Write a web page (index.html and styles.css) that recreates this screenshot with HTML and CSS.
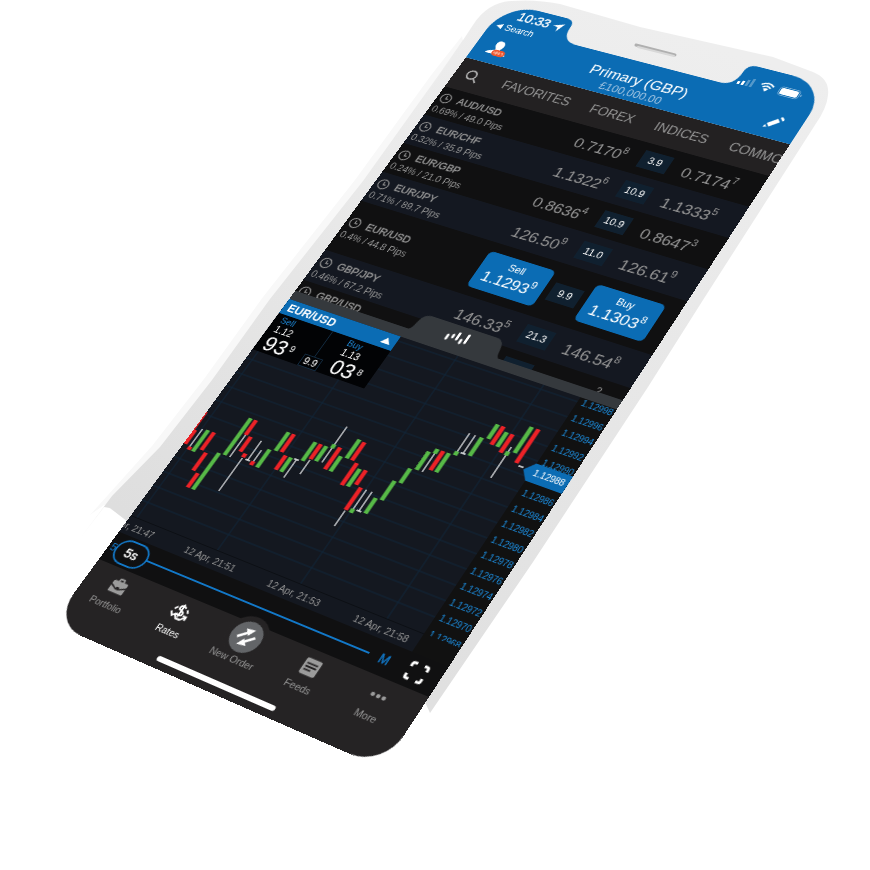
FILE: index.html
```html
<!DOCTYPE html>
<html lang="en">
<head>
<meta charset="utf-8">
<meta name="viewport" content="width=device-width, initial-scale=1">
<title>Rates – Primary (GBP)</title>
<link rel="stylesheet" href="styles.css">
</head>
<body>
<main class="scene">
  <svg class="body" width="870" height="870" viewBox="0 0 870 870" aria-hidden="true">
    <defs>
      <linearGradient id="shell" gradientUnits="userSpaceOnUse" x1="700" y1="40" x2="480" y2="700">
        <stop offset="0" stop-color="#eeeeee"/>
        <stop offset="1" stop-color="#e0e0e0"/>
      </linearGradient>
      <linearGradient id="edge" gradientUnits="userSpaceOnUse" x1="460" y1="40" x2="120" y2="510">
        <stop offset="0" stop-color="#eeeeee"/>
        <stop offset="1" stop-color="#dedede"/>
      </linearGradient>
    </defs>
    <path fill="#f8f8f8" d="M462 36L432 74L355 180L263 297L204 379L152 446L90 515L104 505L128 520L470 80Z"/>
    <path fill="url(#edge)" d="M463 40L438 76L363 181L270 299L212 380L160 447L112 496L82 536L104 507L110 508L128 522L200 500L470 80Z"/>
    <path fill="url(#shell)" d="M560 4L640 27L773 57L813 72Q830 79 828 95Q827 108 815 125L703 300L648 387L533 562L430 713L415 680L480 120L430 90L452 57L473 25Q488 2 512 1Q535 -1 560 4Z"/>
    <path d="M636 45L675 55" stroke="#b0b0b0" stroke-width="3" stroke-linecap="round"/>
    <path d="M638 47L674 56" stroke="#d8d8d8" stroke-width="2" stroke-linecap="round"/>
  </svg>

  <div class="screen">
    <header class="top">
      <div class="status">
        <div class="clock-side">
          <span class="time">10:33
            <svg width="13" height="13" viewBox="0 0 12 12" aria-hidden="true"><path fill="#fff" d="M12 0L0 5L6 6L7 12Z"/></svg>
          </span>
          <a class="back" href="#search"><span class="caret"></span>Search</a>
        </div>
        <div class="signals">
          <svg width="20" height="12" viewBox="0 0 20 12" aria-label="Signal">
            <path fill="#fff" d="M0 8h3v4H0zM5 6h3v6H5z"/>
            <path fill="#fff" fill-opacity=".3" d="M10 3h3v9h-3zM15 0h3v12h-3z"/>
          </svg>
          <svg width="17" height="13" viewBox="0 0 17 13" aria-label="Wi-Fi">
            <g fill="none" stroke="#fff" stroke-width="2"><path d="M1 4.5Q8.5-2 16 4.5"/><path d="M3.5 7.5Q8.5 3 13.5 7.5"/></g>
            <path fill="#fff" d="M5.5 9.5Q8.5 7 11.5 9.5L8.5 13Z"/>
          </svg>
          <svg width="28" height="13" viewBox="0 0 28 13" aria-label="Battery">
            <rect x=".5" y=".5" width="24" height="12" rx="3.5" fill="none" stroke="#fff" stroke-opacity=".45"/>
            <rect x="2" y="2" width="21" height="9" rx="2" fill="#fff"/>
            <path d="M26 4.5v4Q27.5 8 27.5 6.5T26 4.5" fill="#fff" fill-opacity=".5"/>
          </svg>
        </div>
      </div>
      <div class="title-bar">
        <button class="icon-button" type="button" aria-label="Account">
          <svg width="30" height="24" viewBox="0 0 30 24">
            <path fill="#fff" d="M13 0C17 0 19 3 19 6C19 10 17 11 17 13C17 15 26 15 27 20H1C2 15 11 15 11 13C11 11 8 10 8 6C8 3 9 0 13 0Z"/>
            <rect x="9" y="13" width="17" height="9" rx="4.5" fill="#f0562d"/>
            <path d="M12 16v3M14 16h2v3h-2zM18 16h1v3h-1zM21 16h2v3" stroke="#fbd0c0" fill="none"/>
          </svg>
        </button>
        <h1 class="title">Primary (GBP)<small class="balance">£100,000.00</small></h1>
        <button class="icon-button" type="button" aria-label="Edit">
          <svg width="22" height="22" viewBox="0 0 22 22">
            <path fill="#fff" d="M2 20L3 16L6 19ZM4 14L13 5L17 9L8 18ZM15 3L16 2Q17 1 18 2L20 4Q21 5 20 6L19 7Z"/>
          </svg>
        </button>
      </div>
    </header>

    <nav class="tabs" aria-label="Markets">
      <button class="tab search" type="button" aria-label="Search">
        <svg width="18" height="18" viewBox="0 0 18 18" fill="none" stroke="#b4b4b4" stroke-width="1.8"><circle cx="7.5" cy="7.5" r="6"/><path d="M12 12L17 17"/></svg>
      </button>
      <a class="tab" href="#favorites">FAVORITES</a>
      <a class="tab" href="#forex">FOREX</a>
      <a class="tab" href="#indices">INDICES</a>
      <a class="tab" href="#commodities">COMMODITIES</a>
    </nav>

    <svg class="defs" width="0" height="0" aria-hidden="true">
      <symbol id="clock" viewBox="0 0 14 14"><circle cx="7" cy="7" r="6" fill="none" stroke="#8f8f8f" stroke-width="1.3"/><path d="M7 3.5V7.5H10" fill="none" stroke="#8f8f8f" stroke-width="1.3"/></symbol>
    </svg>

    <div class="middle">
      <table class="rates">
        <tbody>
          <tr><th scope="row"><span class="pair"><svg class="clock"><use href="#clock"/></svg>AUD/USD</span><span class="move">0.69% / 49.0 Pips</span></th><td>0.7170<sup>8</sup></td><td class="spread"><span>3.9</span></td><td>0.7174<sup>7</sup></td></tr>
          <tr><th scope="row"><span class="pair"><svg class="clock"><use href="#clock"/></svg>EUR/CHF</span><span class="move">0.32% / 35.9 Pips</span></th><td>1.1322<sup>6</sup></td><td class="spread"><span>10.9</span></td><td>1.1333<sup>5</sup></td></tr>
          <tr><th scope="row"><span class="pair"><svg class="clock"><use href="#clock"/></svg>EUR/GBP</span><span class="move">0.24% / 21.0 Pips</span></th><td>0.8636<sup>4</sup></td><td class="spread"><span>10.9</span></td><td>0.8647<sup>3</sup></td></tr>
          <tr><th scope="row"><span class="pair"><svg class="clock"><use href="#clock"/></svg>EUR/JPY</span><span class="move">0.71% / 89.7 Pips</span></th><td>126.50<sup>9</sup></td><td class="spread"><span>11.0</span></td><td>126.61<sup>9</sup></td></tr>
          <tr class="active"><th scope="row"><span class="pair"><svg class="clock"><use href="#clock"/></svg>EUR/USD</span><span class="move">0.4% / 44.8 Pips</span></th><td><button class="deal" type="button"><span>Sell</span><b>1.1293<sup>9</sup></b></button></td><td class="spread"><span>9.9</span></td><td><button class="deal" type="button"><span>Buy</span><b>1.1303<sup>8</sup></b></button></td></tr>
          <tr><th scope="row"><span class="pair"><svg class="clock"><use href="#clock"/></svg>GBP/JPY</span><span class="move">0.46% / 67.2 Pips</span></th><td>146.33<sup>5</sup></td><td class="spread"><span>21.3</span></td><td>146.54<sup>8</sup></td></tr>
          <tr class="peek"><th scope="row"><span class="pair"><svg class="clock"><use href="#clock"/></svg>GBP/USD</span></th><td></td><td class="spread"><span></span></td><td><sup>2</sup></td></tr>
        </tbody>
      </table>
    </div>

    <section class="panel" aria-label="EUR/USD chart">
      <button class="handle" type="button" aria-label="Collapse chart">
        <svg width="118" height="24" viewBox="0 0 118 24">
          <path fill="#35393d" d="M0 24C6 22 5 18 7 10Q9 0 18 0H100Q109 0 111 10C113 18 112 22 118 24Z"/>
          <path d="M48 15v5M54 13v3M59.5 9v8M65 16v4M70.5 8v10" stroke="#fff" stroke-width="3" stroke-linecap="round" fill="none"/>
        </svg>
      </button>
      <div class="chart">
        <svg class="plot" viewBox="0 0 371 300" aria-hidden="true">
          <path class="grid" d="M0 6H371M0 26H371M0 45H371M0 65H371M0 84H371M0 104H371M0 123H371M0 143H371M0 163H371M0 182H371M0 202H371M0 221H371M0 241H371M0 260H371M0 280H371M8 0V300M115 0V300M221 0V300M327 0V300"/>
          <path class="wick" d="M9 180V204M59 169V199M73 195V239M80 169V195M77 195H83M87 179V195M130 175V199M127 175H133M144 170V189M158 149V168M158 120V145M215 209V229M222 179V204M229 179V204M226 204H232M265 113V139M286 80V104M293 80V104M290 104H296M336 79V119M355 96H361"/>
          <path class="rise" d="M16 179V208M45 199V248M52 149V199M95 175V199M102 149V174M123 175V194M137 149V174M151 149V169M158 144V149M173 154V174M180 129V154M201 160V183M222 204V209M237 184V204M244 159V184M251 140V159M258 115V139M265 109V115M279 109V134M286 104V109M301 80V104M308 60V79M322 65V84M336 85V90M343 50V84"/>
          <path class="fall" d="M-1 160V185M2 184V203M10 204V208M24 179V203M31 204V228M38 229V248M59 149V169M66 169V189M73 189V194M87 194V199M109 149V173M116 175V194M144 149V169M166 145V174M187 130V154M194 155V184M208 159V178M215 179V208M272 109V134M315 60V84M329 65V89M351 50V94"/>
        </svg>
        <ol class="times"><li>12 Apr, 21:47</li><li>12 Apr, 21:51</li><li>12 Apr, 21:53</li><li>12 Apr, 21:58</li></ol>
        <div class="axis">
          <ol class="prices"><li>1.12998</li><li>1.12996</li><li>1.12994</li><li>1.12992</li><li>1.12990</li><li>1.12988</li><li>1.12986</li><li>1.12984</li><li>1.12982</li><li>1.12980</li><li>1.12978</li><li>1.12976</li><li>1.12974</li><li>1.12972</li><li>1.12970</li><li>1.12968</li></ol>
          <span class="marker">1.12988</span>
        </div>
        <div class="quote">
          <h2 class="quote-title">EUR/USD<span class="up"></span></h2>
          <div class="quote-body">
            <div class="side"><span class="label">Sell</span><span class="big-figure">1.12</span><span class="pips">93<sup>9</sup></span></div>
            <div class="side buy"><span class="label">Buy</span><span class="big-figure">1.13</span><span class="pips">03<sup>8</sup></span></div>
            <span class="quote-spread">9.9</span>
          </div>
        </div>
      </div>
      <div class="period">
        <label class="period-min" for="period">5s</label>
        <input class="range" id="period" type="range" min="0" max="10" value="0">
        <output class="period-value" for="period">5s</output>
        <span class="period-max">M</span>
        <button class="icon-button" type="button" aria-label="Full screen">
          <svg width="24" height="24" viewBox="0 0 24 24" fill="none" stroke="#fff" stroke-width="3"><path d="M3 8V5Q3 3 5 3H8M16 3H19Q21 3 21 5V8M21 16V19Q21 21 19 21H16M8 21H5Q3 21 3 19V16"/></svg>
        </button>
      </div>
    </section>

    <nav class="bottom" aria-label="Main">
      <a class="item" href="#portfolio">
        <svg width="22" height="22" viewBox="0 0 24 24"><path fill="#9b9b9b" fill-rule="evenodd" d="M8 6V4Q8 2 10 2H14Q16 2 16 4V6H20Q22 6 22 8V11L14 15V13H10V15L2 11V8Q2 6 4 6ZM10 6H14V4H10ZM2 13L10 17H14L22 13V20Q22 21 21 21H3Q2 21 2 20Z"/></svg>
        Portfolio</a>
      <a class="item current" href="#rates">
        <svg width="22" height="22" viewBox="0 0 26 26" fill="none" stroke="#fff" stroke-width="2.4"><path d="M17 6Q15 4 13 4Q9 4 9 7.500Q9 10 13 10.5Q17 11 17 14Q17 17 13 17Q10 17 9 15M13 1.500V19.5"/><path d="M3 11L6 7M23 11L20 7M1 15L5 20L8 17L12 22H18L23 17M19 16H24V21"/></svg>
        Rates</a>
      <a class="item order" href="#new-order">
        <svg width="36" height="36" viewBox="0 0 36 36"><circle cx="18" cy="18" r="18" fill="#636568"/><g transform="rotate(-42 18 18)" fill="#fff"><path d="M9 12H20V8L29 14L20 17V15H9Z"/><path d="M27 24H16V28L7 22L16 19V21H27Z"/></g></svg>
        New Order</a>
      <a class="item" href="#feeds">
        <svg width="22" height="22" viewBox="0 0 24 24"><rect x="2" y="2" width="20" height="20" rx="2" fill="#9b9b9b"/><path d="M5 8H19M5 12H19M5 16H14" stroke="#252324" stroke-width="2"/></svg>
        Feeds</a>
      <a class="item" href="#more">
        <svg width="22" height="22" viewBox="0 0 24 24" fill="#9b9b9b"><circle cx="5" cy="12" r="2.5"/><circle cx="12" cy="12" r="2.5"/><circle cx="19" cy="12" r="2.5"/></svg>
        More</a>
      <span class="home"></span>
    </nav>
  </div>
</main>
</body>
</html>
```
FILE: styles.css
```css
* { box-sizing: border-box; }

body {
  margin: 0;
  background: #fff;
  font-family: "Liberation Sans", Arial, sans-serif;
}

button { border: 0; padding: 0; background: none; font: inherit; color: inherit; }
a { color: inherit; text-decoration: none; }
ol { margin: 0; padding: 0; list-style: none; }
svg { display: block; }

.scene { position: relative; min-height: 100vh; overflow: hidden; }
.body { position: absolute; top: 0; left: 0; }
.defs { position: absolute; }

/* The handset: a 414 × 896 point display seen in perspective. */
.screen {
  position: absolute;
  top: 0;
  left: 0;
  display: flex;
  flex-direction: column;
  width: 414px;
  height: 896px;
  overflow: hidden;
  border-radius: 44px 44px 38px 38px;
  color: #959595;
  transform-origin: 0 0;
  transform: matrix3d(0.6439, 0.18405, 0, -0.00016456, -0.5132, 0.6129, 0, -0.00012765, 0, 0, 1, 0, 505.93, 2.721, 0, 1);
}

/* Header, cut out around the sensor notch */
.top {
  height: 88px;
  background: #0b6cb4;
  color: #fff;
  clip-path: path("M0 0H82Q94 0 94 11Q94 33 116 33H298Q316 33 316 12Q316 0 328 0H414V89H0Z");
}
.status { display: flex; justify-content: space-between; height: 44px; padding: 5px 20px 0 18px; }
.time { display: flex; gap: 4px; align-items: center; padding-left: 8px; font-size: 17px; line-height: 20px; -webkit-text-stroke: .4px #fff; }
.back { display: flex; gap: 4px; align-items: center; margin-left: -10px; font-size: 12px; line-height: 18px; }
.caret { border: 4px solid transparent; border-right: 8px solid #fff; border-left: 0; }
.signals { display: flex; gap: 6px; align-items: center; height: 36px; }
.title-bar { display: flex; justify-content: space-between; padding: 4px 20px 0 16px; }
.icon-button { display: grid; place-items: center; height: 36px; }
.title { display: flex; flex-direction: column; align-items: center; margin: 0; padding-left: 4px; font-size: 19px; font-weight: 400; line-height: 22px; }
.balance { font-size: 14px; line-height: 14px; color: #a5c6e2; }

/* Market tabs */
.tabs { display: flex; gap: 27px; align-items: center; height: 46px; padding-left: 14px; overflow: hidden; background: #232122; font-size: 16px; }
.tab { flex: none; }
.search { width: 23px; }

/* Rates table */
.middle { height: 309px; overflow: hidden; background: #101011; }
.rates { width: 100%; table-layout: fixed; border-collapse: collapse; }
.rates tr { display: grid; grid-template-columns: 1fr 83px 35px 83px; gap: 8px; align-items: center; height: 44px; padding: 0 18px 0 4px; }
.rates tr:nth-child(even) { background: #141821; }
.rates tr.active { height: 73px; }
.rates th { padding: 4px 0 0; font-weight: 400; text-align: left; }
.rates td { padding: 6px 0 0; font-size: 19px; line-height: 24px; text-align: center; white-space: nowrap; }
.pair { display: flex; gap: 8px; align-items: center; font-size: 13px; line-height: 18px; -webkit-text-stroke: .4px #959595; }
.clock { width: 15px; height: 15px; }
.move { display: block; font-size: 12px; line-height: 18px; }
sup { font-size: 12px; line-height: 0; vertical-align: 9px; }
.rates .spread { padding: 0; font-size: 12px; color: #fff; }
.spread span { display: block; height: 24px; background: #10202f; }
.rates .active td { padding: 0; }
.deal { display: block; width: 100%; height: 50px; border-radius: 6px; background: #0b6cb4; color: #fff; }
.deal span { display: block; font-size: 12px; line-height: 14px; }
.deal b { display: block; font-size: 19px; font-weight: 400; line-height: 24px; }
.rates .peek { align-items: start; }
.peek .spread { margin-top: 10px; }
.rates .peek td:last-child { padding: 10px 8px 0; text-align: right; }

/* Chart panel */
.panel { position: relative; border-top: 12px solid #35393d; background: #101011; }
.handle { position: absolute; bottom: 100%; left: 148px; margin-bottom: 11px; }
.chart { position: relative; display: grid; grid-template-columns: 371px 1fr; grid-template-rows: 300px 22px; background: #141820; }
.plot { width: 371px; height: 300px; }
.plot path { fill: none; }
.grid { stroke: #10273b; stroke-width: 1; }
.wick { stroke: #f2f3f4; stroke-width: 1.3; }
.rise { stroke: #57b947; stroke-width: 5; }
.fall { stroke: #ec2227; stroke-width: 5; }
.times { display: grid; grid-template-columns: repeat(4, 107px); grid-row: 2; justify-content: end; margin-right: -10px; border-top: 1px solid #0c0f14; overflow: hidden; }
.times li { font-size: 11px; line-height: 22px; text-align: center; }
.axis { position: relative; grid-row: 1 / 3; grid-column: 2; background: #111; color: #1d8ee0; font-size: 10px; }
.prices { height: 300px; overflow: hidden; }
.prices li { height: 20px; padding-left: 5px; line-height: 20px; }
.prices li:first-child { margin-top: -4px; }
.prices li:nth-child(even) { height: 19px; }
.marker { position: absolute; top: 87px; right: 0; width: 52px; padding-left: 12px; background: #0b6cb4; clip-path: polygon(0 50%, 9px 0, 100% 0, 100% 100%, 9px 100%); color: #fff; line-height: 22px; }

/* Quote box over the chart */
.quote { position: absolute; top: 0; left: 0; width: 148px; color: #fff; }
.quote-title { display: flex; justify-content: space-between; align-items: center; margin: 0; padding: 0 6px; background: #0b6cb4; font-size: 14px; line-height: 20px; }
.up { border: 6px solid transparent; border-top: 0; border-bottom: 8px solid #fff; }
.quote-body { position: relative; display: grid; grid-template-columns: 72px 1fr; height: 52px; background: #020305; }
.side { display: flex; flex-direction: column; padding-left: 8px; }
.buy { border-left: 1px solid #122b41; padding-left: 24px; }
.side .label { font-size: 11px; line-height: 14px; color: #1d86d4; }
.big-figure { font-size: 12px; line-height: 13px; }
.pips { font-size: 26px; line-height: 24px; }
.pips sup { padding-left: 3px; vertical-align: 8px; font-size: 11px; }
.quote-spread { position: absolute; bottom: 0; left: 60px; width: 24px; border: 1px solid #122b41; background: #020305; font-size: 12px; line-height: 14px; text-align: center; }

/* Period slider */
.period { position: relative; display: flex; align-items: center; height: 36px; padding: 0 14px 0 3px; color: #1278c8; font-size: 12px; }
.period-min { width: 12px; }
.range { flex: 1; margin: 0 12px 0 0; appearance: none; height: 2px; background: #1278c8; }
.range::-webkit-slider-thumb { appearance: none; width: 32px; height: 26px; opacity: 0; }
.period-value { position: absolute; left: 9px; width: 42px; border: 2px solid #1278c8; border-radius: 15px; background: #101011; color: #fff; font-size: 15px; line-height: 26px; text-align: center; pointer-events: none; -webkit-text-stroke: .4px #fff; }
.period-max { margin-right: 20px; font-size: 14px; -webkit-text-stroke: .4px #1278c8; }

/* Bottom navigation */
.bottom { position: relative; display: grid; grid-template-columns: repeat(5, 1fr); flex: 1; align-items: start; padding: 8px 6px 0 0; margin-right: 0; background: #252324; }
.item { display: flex; flex-direction: column; align-items: center; justify-content: space-between; height: 40px; font-size: 11px; line-height: 12px; white-space: nowrap; color: #959595; }
.item.current { color: #fff; }
.order svg { margin-top: -10px; border-radius: 50%; box-shadow: 0 0 0 6px #252324; }
.home { position: absolute; bottom: 8px; left: 50%; width: 148px; height: 6px; margin-left: -76px; border-radius: 3px; background: #fff; }
```
